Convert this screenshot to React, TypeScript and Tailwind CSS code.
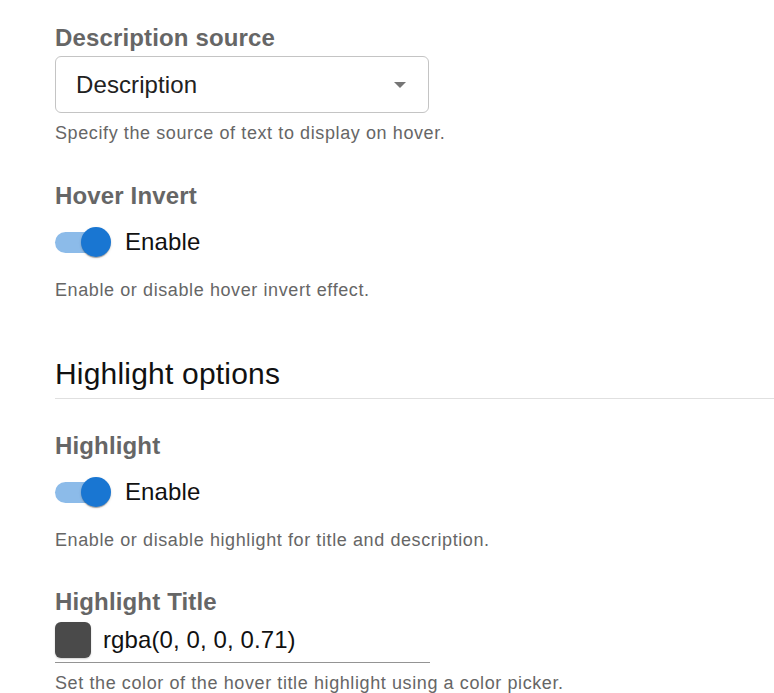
import React, { useState } from 'react';

const font = { fontFamily: '"Liberation Sans", Arial, sans-serif' };

interface ToggleProps {
  checked: boolean;
  onChange: () => void;
}

const Toggle: React.FC<ToggleProps> = ({ checked, onChange }) => (
  <button
    type="button"
    onClick={onChange}
    className="flex items-center h-[40px] -ml-[18px] w-[88px] pl-[18px] shrink-0"
  >
    <span className="relative flex items-center w-[51px] h-[21px]">
      <span
        className={`w-[51px] h-[21px] rounded-full ${checked ? 'bg-[#8cbbe9]' : 'bg-[#b5b5b5]'}`}
      />
      <span
        className={`absolute top-[-4.5px] w-[30px] h-[30px] rounded-full shadow-[0_2px_1px_-1px_rgba(0,0,0,0.2),0_1px_1px_0_rgba(0,0,0,0.14),0_1px_3px_0_rgba(0,0,0,0.12)] ${
          checked ? 'left-[26px] bg-[#1976d2]' : 'left-[-4.5px] bg-[#fafafa]'
        }`}
      />
    </span>
  </button>
);

const Label: React.FC<{ children: React.ReactNode; className?: string }> = ({ children, className }) => (
  <div className={`text-[24px] leading-[28px] tracking-[0.15px] font-bold text-[#666] ${className ?? ''}`}>{children}</div>
);

const Helper: React.FC<{ children: React.ReactNode; className?: string }> = ({ children, className }) => (
  <p className={`text-[18px] leading-[22px] tracking-[0.6px] text-[#666] ${className ?? ''}`}>{children}</p>
);

export default function App() {
  const [hoverInvert, setHoverInvert] = useState(true);
  const [highlight, setHighlight] = useState(true);

  return (
    <div className="min-h-[693px] bg-white pl-[55px] pt-[24px]" style={font}>
      {/* Description source */}
      <Label>Description source</Label>
      <div className="mt-[4px] w-[374px] h-[57px] border border-[#c4c4c4] rounded-[6px] flex items-center justify-between pl-[20px] pr-[20px]">
        <span className="text-[24px] tracking-[0.1px] text-[#212121]">Description</span>
        <svg width="14" height="8" viewBox="0 0 14 8" className="mr-[1px]">
          <path d="M1 1 L7 7 L13 1 Z" fill="#757575" />
        </svg>
      </div>
      <Helper className="mt-[9px]">Specify the source of text to display on hover.</Helper>

      {/* Hover invert */}
      <Label className="mt-[38px]">Hover Invert</Label>
      <div className="mt-[12px] flex items-center">
        <Toggle checked={hoverInvert} onChange={() => setHoverInvert(v => !v)} />
        <span className="text-[24px] tracking-[0.1px] text-[#111]">Enable</span>
      </div>
      <Helper className="mt-[17px]">Enable or disable hover invert effect.</Helper>

      {/* Highlight options */}
      <h2 className="mt-[55px] text-[30px] leading-[36px] tracking-[0.2px] text-[#111]">Highlight options</h2>
      <div className="mt-[6px] border-t border-[#e0e0e0]" />

      <Label className="mt-[33px]">Highlight</Label>
      <div className="mt-[12px] flex items-center">
        <Toggle checked={highlight} onChange={() => setHighlight(v => !v)} />
        <span className="text-[24px] tracking-[0.1px] text-[#111]">Enable</span>
      </div>
      <Helper className="mt-[17px]">Enable or disable highlight for title and description.</Helper>

      <Label className="mt-[37px]">Highlight Title</Label>
      <div className="mt-[6px] w-[375px] pb-[4px] border-b border-[#949494] flex items-center gap-[12px]">
        <div className="w-[36px] h-[36px] rounded-[6px] bg-[#4a4a4a] shadow-[0_1px_2px_rgba(0,0,0,0.2)]" />
        <span className="text-[24px] tracking-[0.1px] text-[#111]">rgba(0, 0, 0, 0.71)</span>
      </div>
      <Helper className="mt-[9px]">Set the color of the hover title highlight using a color picker.</Helper>
    </div>
  );
}
